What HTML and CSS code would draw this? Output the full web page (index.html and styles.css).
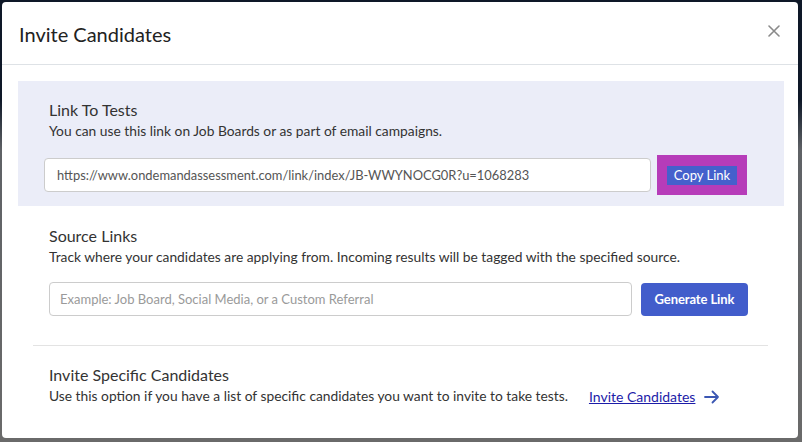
FILE: index.html
```html
<!DOCTYPE html>
<html>
<head>
<meta charset="utf-8">
<link rel="stylesheet" href="styles.css">
</head>
<body>
<div class="backdrop">
  <div class="modal">
    <div class="modal-header">
      <h1 class="modal-title">Invite Candidates</h1>
      <svg class="close" width="12" height="12" viewBox="0 0 12 12"><path d="M1 1L11 11M11 1L1 11" stroke="#8a8a8a" stroke-width="1.6" stroke-linecap="round"/></svg>
    </div>
    <div class="modal-body">
      <section class="sec sec-blue">
        <h2 class="sec-title">Link To Tests</h2>
        <p class="sec-sub">You can use this link on Job Boards or as part of email campaigns.</p>
        <div class="row row-link">
          <div class="field field-link">https://www.ondemandassessment.com/link/index/JB-WWYNOCG0R?u=1068283</div>
          <div class="copy-wrap"><span class="copy-btn">Copy Link</span></div>
        </div>
      </section>
      <section class="sec sec-source">
        <h2 class="sec-title">Source Links</h2>
        <p class="sec-sub">Track where your candidates are applying from. Incoming results will be tagged with the specified source.</p>
        <div class="row row-source">
          <div class="field field-source">Example: Job Board, Social Media, or a Custom Referral</div>
          <span class="gen-btn">Generate Link</span>
        </div>
      </section>
      <hr class="divider">
      <section class="sec sec-invite">
        <h2 class="sec-title">Invite Specific Candidates</h2>
        <div class="invite-row">
          <p class="sec-sub">Use this option if you have a list of specific candidates you want to invite to take tests.</p>
          <a class="invite-link" href="#">Invite Candidates</a>
          <svg class="arrow" width="16" height="14" viewBox="0 0 16 14"><path d="M1 7H14M8.5 1.5L14 7L8.5 12.5" fill="none" stroke="#3b57b3" stroke-width="1.8" stroke-linecap="round" stroke-linejoin="round"/></svg>
        </div>
      </section>
    </div>
  </div>
</div>
</body>
</html>
```
FILE: styles.css
```css
* { box-sizing: border-box; }
html, body { margin: 0; padding: 0; }
body {
  width: 802px;
  height: 442px;
  overflow: hidden;
  font-family: Lato, "Open Sans", sans-serif;
  background: linear-gradient(to bottom, #0e1828 0, #0e1828 100px, #5f6266 150px, #6a6a6a 100%);
}
.backdrop {
  padding: 2px 4px 4px 2px;
}
.modal {
  background: #fff;
  border-radius: 4px;
  height: 436px;
  width: 796px;
  display: flex;
  flex-direction: column;
}
.modal-header {
  display: flex;
  justify-content: space-between;
  align-items: center;
  height: 63px;
  padding: 0 17px 0 17px;
  border-bottom: 1px solid #dee2e6;
}
.modal-title {
  margin: 0;
  font-size: 20px;
  font-weight: 400;
  color: #222;
  line-height: 24px;
  padding-top: 2px;
}
.close {
  margin-top: -4px;
  margin-right: 1px;
}
.modal-body {
  padding: 16px 14px 0 16px;
}
.sec-title {
  margin: 0;
  font-size: 16px;
  font-weight: 400;
  line-height: 20px;
  color: #333;
}
.sec-sub {
  margin: 1px 0 0;
  font-size: 13.8px;
  line-height: 20px;
  color: #333;
}
.sec-blue {
  background: #ebedf8;
  height: 125px;
  padding: 19px 36px 0 26px;
}
.sec-blue .sec-title, .sec-blue .sec-sub { padding-left: 5px; }
.row {
  display: flex;
  align-items: center;
}
.row-link { margin-top: 14px; gap: 6px; }
.field {
  background: #fff;
  border: 1px solid #ccc;
  border-radius: 4px;
  font-size: 13px;
  display: flex;
  align-items: center;
}
.field-link {
  width: 607px;
  height: 34px;
  padding-left: 12px;
  color: #555;
  font-size: 12.9px;
}
.copy-wrap {
  background: #b63cb9;
  width: 90px;
  height: 40px;
  display: flex;
  align-items: center;
  justify-content: center;
}
.copy-btn {
  background: #4560cc;
  color: #fff;
  font-size: 13px;
  width: 70px;
  height: 19px;
  line-height: 19px;
  text-align: center;
}
.sec-source {
  padding: 20px 36px 0 31px;
}
.row-source { margin-top: 15px; gap: 9px; }
.field-source {
  width: 583px;
  height: 34px;
  padding-left: 10px;
  color: #9a9a9a;
}
.gen-btn {
  background: #425dcb;
  color: #fff;
  font-size: 13px;
  font-weight: 700;
  width: 107px;
  height: 33px;
  border-radius: 4px;
  display: flex;
  align-items: center;
  justify-content: center;
  letter-spacing: -0.1px;
}
.divider {
  margin: 29px 16px 0 15px;
  border: 0;
  border-top: 1px solid #e3e3e3;
}
.sec-invite {
  padding: 19px 36px 0 31px;
}
.invite-row {
  display: flex;
  align-items: center;
  margin-top: 1px;
}
.invite-row .sec-sub { margin: 0; }
.invite-link {
  margin-left: 21px;
  font-size: 14px;
  color: #1c1ca8;
  text-decoration: underline;
}
.arrow { margin-left: 9px; margin-top: 1px; }
```
